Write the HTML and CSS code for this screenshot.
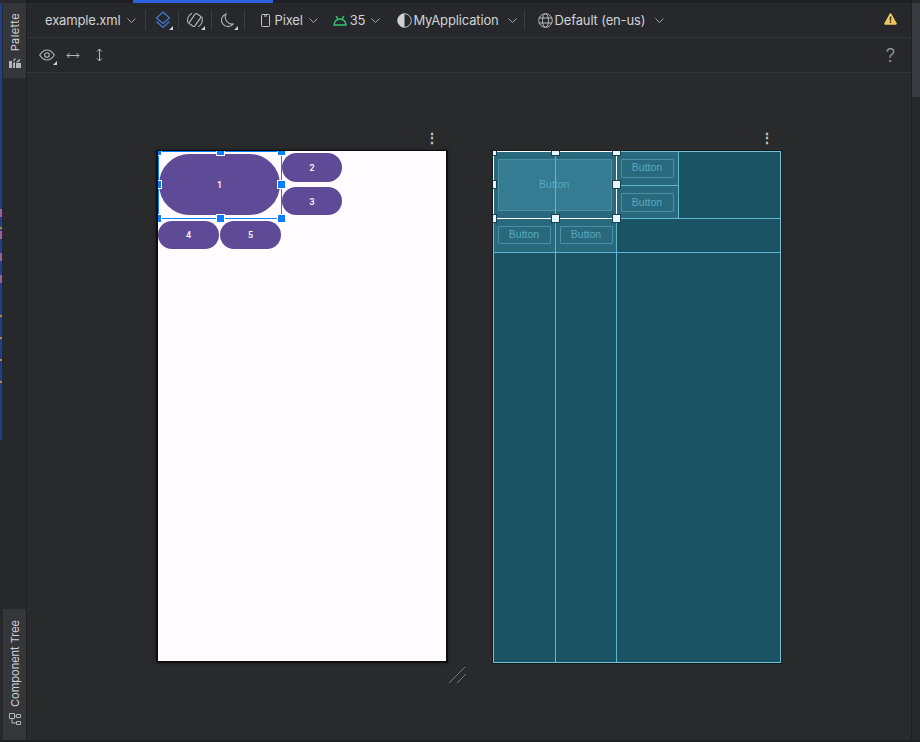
FILE: index.html
```html
<!DOCTYPE html>
<html lang="en">
<head>
  <meta charset="UTF-8" />
  <title>example.xml</title>
  <link rel="stylesheet" href="styles.css">
</head>
<body>
  <div class="ide">

    <!-- left tool strip -->
    <aside class="strip">
      <div class="gutter">
        <i class="mark pink m1"></i><i class="mark pink m2"></i><i class="mark pink m3"></i><i class="mark pink m4"></i>
        <i class="mark gold m5"></i><i class="mark gold m6"></i><i class="mark gold m7"></i><i class="mark gold m8"></i><i class="mark gold m9"></i>
      </div>
      <div class="tab tab-palette">
        <svg class="tab-icon" width="12" height="12" viewBox="0 0 12 12"><path d="M0 5h3v7H0zM4 12V7l2-1v6zM7 12V7h5v5z" fill="#b4b6bb"/><path d="M4 4.500 6 2l1 1-2.500 2.500zM7 6l3.500-3 1 1L9 6.500z" fill="#b4b6bb"/></svg>
        <span class="tab-label label-palette">Palette</span>
      </div>
      <div class="tab tab-tree">
        <svg class="tab-icon" width="12" height="13" viewBox="0 0 12 13" fill="none" stroke="#b4b6bb"><path d="M.5 1.500h5v5h-5zM7.500 2.500h4v3h-4zM7.500 9.500h4v3h-4zM5.500 4h2M3 6.500V11h4.500"/></svg>
        <span class="tab-label">Component Tree</span>
      </div>
    </aside>

    <main class="main">
      <div class="topline"><div class="progress"></div></div>

      <!-- first toolbar -->
      <div class="toolbar">
        <div class="tool tool-file">example.xml
          <svg class="chev" width="9" height="5" viewBox="0 0 9 5"><path d="M.5.500l4 4 4-4"/></svg>
        </div>
        <div class="sep sep-a"></div>
        <div class="icon corner">
          <svg width="16" height="18" viewBox="0 0 16 18" fill="none" stroke="#3d7fe0" stroke-width="1.100"><path d="M8 1l6.500 6L8 12.500 1.500 7zM1.500 10.500 8 16.500l6.500-6"/></svg>
        </div>
        <div class="sep sep-b"></div>
        <div class="icon corner">
          <svg width="18" height="18" viewBox="0 0 18 18" fill="none" stroke="#b4b6bb" stroke-width="1.100"><rect x="5.700" y="2.800" width="6.600" height="12.400" rx="1.300" transform="rotate(35 9 9)"/><path d="M2.300 12.500A7.600 7.600 0 0 1 6 2.200M15.700 5.500A7.600 7.600 0 0 1 12 15.800"/></svg>
        </div>
        <div class="sep"></div>
        <div class="icon corner">
          <svg width="13" height="15" viewBox="0 0 13 15" fill="none" stroke="#b4b6bb" stroke-width="1.100"><path d="M5 1a6.500 6.500 0 1 0 7.300 10A7 7 0 0 1 5 1z"/></svg>
        </div>
        <div class="sep sep-d"></div>
        <div class="tool tool-device">
          <svg width="9" height="13" viewBox="0 0 9 13" fill="none" stroke="#c4c6cb"><rect x=".5" y=".5" width="8" height="12" rx="1"/><path d="M3 2h3"/></svg>
          <span>Pixel</span>
          <svg class="chev" width="9" height="5" viewBox="0 0 9 5"><path d="M.5.500l4 4 4-4"/></svg>
        </div>
        <div class="tool tool-api">
          <svg width="14" height="11" viewBox="0 0 14 11" fill="none" stroke="#2fc56f" stroke-width="1.500"><path d="M1 10a6 6 0 0 1 12 0zM3.200 1l1.600 3.200M10.800 1 9.200 4.200"/></svg>
          <span>35</span>
          <svg class="chev" width="9" height="5" viewBox="0 0 9 5"><path d="M.5.500l4 4 4-4"/></svg>
        </div>
        <div class="tool tool-theme">
          <svg width="15" height="15" viewBox="0 0 15 15"><circle cx="7.500" cy="7.500" r="6.800" fill="none" stroke="#d0d2d6" stroke-width=".9"/><path d="M7.500.700a6.800 6.800 0 0 0 0 13.600z" fill="#d0d2d6"/></svg>
          <span>MyApplication</span>
          <svg class="chev chev-wide" width="9" height="5" viewBox="0 0 9 5"><path d="M.5.500l4 4 4-4"/></svg>
        </div>
        <div class="sep sep-e"></div>
        <div class="tool tool-locale">
          <svg width="15" height="15" viewBox="0 0 15 15" fill="none" stroke="#c4c6cb" stroke-width=".9"><circle cx="7.500" cy="7.500" r="6.800"/><ellipse cx="7.500" cy="7.500" rx="3" ry="6.800"/><path d="M1 5h13M1 10h13"/></svg>
          <span>Default (en-us)</span>
          <svg class="chev chev-wide" width="9" height="5" viewBox="0 0 9 5"><path d="M.5.500l4 4 4-4"/></svg>
        </div>
        <svg class="warn" width="13" height="12" viewBox="0 0 13 12"><path d="M6.500.300c.5 0 .8.300 1 .7l5.200 9.300c.4.700 0 1.400-.8 1.400H1.100c-.8 0-1.200-.7-.8-1.400L5.500 1c.2-.4.500-.7 1-.7z" fill="#f2c55c"/><path d="M5.800 3.500h1.400v4.200H5.800zM5.800 8.600h1.400V10H5.800z" fill="#27282b"/></svg>
      </div>

      <!-- second toolbar -->
      <div class="toolbar toolbar-second">
        <div class="icon corner icon-eye">
          <svg width="16" height="12" viewBox="0 0 16 12" fill="none" stroke="#b4b6bb" stroke-width="1.100"><path d="M.7 6C3 2.300 5.300 1 8 1s5 1.300 7.300 5C13 9.700 10.700 11 8 11S3 9.700.7 6z"/><circle cx="8" cy="6" r="2.300"/></svg>
        </div>
        <div class="icon icon-width">
          <svg width="14" height="7" viewBox="0 0 14 7" fill="none" stroke="#b4b6bb"><path d="M1 3.500h12M3.500 1 1 3.500 3.500 6M10.500 1 13 3.500 10.500 6"/></svg>
        </div>
        <div class="icon icon-height">
          <svg width="7" height="14" viewBox="0 0 7 14" fill="none" stroke="#b4b6bb"><path d="M3.500 1v12M1 3.500 3.500 1 6 3.500M1 10.500 3.500 13 6 10.500"/></svg>
        </div>
        <span class="help">?</span>
      </div>

      <!-- design surface -->
      <div class="canvas">
        <span class="dots dots-design">⋮</span>
        <span class="dots dots-blue">⋮</span>

        <div class="device device-design">
          <div class="cells">
            <button class="btn big">1</button>
            <button class="btn b2">2</button>
            <button class="btn b3">3</button>
            <button class="btn b4">4</button>
            <button class="btn b5">5</button>
          </div>
          <div class="selection">
            <i class="handle tl"></i><i class="handle tc"></i><i class="handle tr"></i>
            <i class="handle ml"></i><i class="handle mr"></i>
            <i class="handle bl"></i><i class="handle bc"></i><i class="handle br"></i>
          </div>
        </div>

        <div class="device device-blue">
          <div class="shade"></div>
          <div class="cells">
            <div class="ghost big">Button</div>
            <div class="ghost b2">Button</div>
            <div class="ghost b3">Button</div>
            <div class="ghost b4">Button</div>
            <div class="ghost b5">Button</div>
          </div>
          <i class="rule v1"></i><i class="rule v2"></i><i class="rule v3"></i>
          <i class="rule h1"></i><i class="rule h2"></i><i class="rule h3"></i>
          <div class="selection">
            <i class="handle tl"></i><i class="handle tc"></i><i class="handle tr"></i>
            <i class="handle ml"></i><i class="handle mr"></i>
            <i class="handle bl"></i><i class="handle bc"></i><i class="handle br"></i>
          </div>
        </div>

        <svg class="resize" width="20" height="18" viewBox="0 0 20 18" fill="none" stroke="#77797d"><path d="M1 17 17 1M9 17l9-9"/></svg>
      </div>
    </main>

    <div class="scroll"><div class="scroll-thumb"></div></div>
  </div>
</body>
</html>
```

FILE: styles.css
```css
* { margin: 0; padding: 0; box-sizing: border-box; }

html, body {
  width: 920px;
  height: 742px;
  overflow: hidden;
}

body {
  font-family: Inter, "Noto Sans", sans-serif;
  background: #1e1f22;
  color: #d0d2d6;
}

.ide {
  display: flex;
  height: 740px;
}

/* left strip */
.strip {
  position: relative;
  width: 27px;
  flex-shrink: 0;
  padding: 3px 0 0 3px;
  display: flex;
  flex-direction: column;
  justify-content: space-between;
  background: #27282b;
  border-right: 1px solid #1e1f22;
}

.gutter {
  position: absolute;
  left: 0;
  top: 3px;
  width: 2px;
  height: 437px;
  background: #1d3f8c;
}

.mark { position: absolute; left: 0; width: 2px; }
.pink { height: 8px; background: #a0609f; }
.gold { height: 2px; background: #b08c3c; }
.m1 { top: 206px; }
.m2 { top: 228px; }
.m3 { top: 250px; }
.m4 { top: 272px; }
.m5 { top: 224px; }
.m6 { top: 312px; }
.m7 { top: 334px; }
.m8 { top: 356px; }
.m9 { top: 378px; }

.tab {
  width: 23px;
  background: #35363a;
  display: flex;
  flex-direction: column-reverse;
  align-items: center;
  justify-content: flex-start;
  gap: 5px;
}

.tab-palette { height: 75px; padding-bottom: 10px; }
.tab-tree { height: 131px; padding-bottom: 15px; }

.tab-label {
  writing-mode: vertical-rl;
  transform: rotate(180deg);
  font-size: 11px;
  color: #d0d2d6;
  white-space: nowrap;
}

.label-palette { letter-spacing: 0.4px; }

.tab-icon { flex-shrink: 0; }

/* main column */
.main {
  width: 885px;
  flex-shrink: 0;
  display: flex;
  flex-direction: column;
  border-right: 1px solid #1e1f22;
}

.topline {
  height: 3px;
  background: #1e1f22;
  padding-left: 106px;
}

.progress {
  width: 140px;
  height: 3px;
  background: #2c62e0;
}

.toolbar {
  height: 35px;
  display: flex;
  align-items: center;
  padding-left: 18px;
  background: #27282b;
  border-bottom: 1px solid #353639;
  font-size: 13px;
  letter-spacing: -0.15px;
  flex-shrink: 0;
}

.toolbar-second {
  padding-left: 11px;
}

.tool {
  display: flex;
  align-items: center;
  color: #d0d2d6;
  white-space: nowrap;
}

.chev {
  margin-left: 6px;
  fill: none;
  stroke: #a4a6ab;
}

.chev-wide { margin-left: 9px; }

.tool-device { margin-left: 16px; }
.tool-device span { margin-left: 5px; }
.tool-api { margin-left: 15px; }
.tool-api span { margin-left: 3px; }
.tool-theme { margin-left: 17px; }
.tool-theme span { margin-left: 1px; }
.tool-locale { margin-left: 13px; }
.tool-locale span { margin-left: 2px; }
.tool-locale .chev { margin-left: 10px; }

.sep {
  width: 1px;
  height: 20px;
  flex-shrink: 0;
  background: #3c3d41;
  margin: 0 7px;
}

.sep-a { margin: 0 8px 0 9px; }
.sep-b { margin: 0 7px 0 6px; }
.sep-d { margin: 0 0 0 7px; }
.sep-e { margin: 0 0 0 7px; }

.icon {
  position: relative;
  display: flex;
  align-items: center;
  justify-content: center;
}

.corner { width: 18px; height: 20px; }

.corner::after {
  content: "";
  position: absolute;
  right: -1px;
  bottom: 0;
  border-left: 4px solid transparent;
  border-bottom: 4px solid #d0d2d6;
}

.icon-width { margin-left: 10px; }
.icon-height { margin-left: 16px; }

.warn {
  margin-left: auto;
  margin-right: 14px;
  margin-top: -2px;
}

.help {
  margin-left: auto;
  margin-right: 16px;
  font-size: 19px;
  color: #9a9ca0;
  font-weight: 300;
}

/* design surface, devices sit on a free canvas */
.canvas {
  position: relative;
  flex: 1;
  background: #292a2c;
}

.dots {
  position: absolute;
  top: 56px;
  font-size: 14px;
  line-height: 18px;
  font-weight: 700;
  color: #c4c6cb;
}

.dots-design { left: 398px; }
.dots-blue { left: 733px; }

.device {
  position: absolute;
}

.device-design {
  left: 129px;
  top: 77px;
  width: 292px;
  height: 513px;
  background: #fffbfe;
  border: 2px solid #0d0d0e;
  border-top-width: 1px;
  box-shadow: 0 0 4px rgba(0, 0, 0, 0.4);
}

.device-blue {
  left: 466px;
  top: 78px;
  width: 288px;
  height: 512px;
  background: #1a5364;
  border: 1px solid #6fc4d8;
  outline: 1px solid #17181a;
}

.cells {
  display: grid;
  grid-template-columns: 61.500px 61.500px 62px;
  grid-template-rows: 33.500px 33.500px 34px;
  width: 185px;
}

.device-blue .cells { margin: -1px 0 0 -1px; }

.btn {
  border: none;
  border-radius: 14.500px;
  background: #5f4a97;
  color: #fff;
  font-family: Roboto, sans-serif;
  font-size: 9px;
  font-weight: 500;
}

.big {
  grid-column: span 2;
  grid-row: span 2;
}

.btn.big { margin: 3px 1px; border-radius: 31px; }
.btn.b2 { margin: 2px 1px 2.500px; padding-top: 1px; }
.btn.b3 { margin: 2.500px 1px 3px; padding-top: 1px; }
.btn.b4 { margin: 3px 0.500px 3px 0; }
.btn.b5 { margin: 3px 0 3px 0.500px; }

.shade {
  position: absolute;
  left: -1px;
  top: -1px;
  width: 186px;
  height: 67px;
  background: rgba(105, 195, 225, 0.2);
}

.shade::after {
  content: "";
  position: absolute;
  left: 0;
  top: 67px;
  width: 124px;
  height: 34px;
  background: rgba(105, 195, 225, 0.2);
}

.ghost {
  position: relative;
  border: 1px solid #4a8fa3;
  border-radius: 1px;
  color: #57a9c0;
  font-family: "Liberation Sans", sans-serif;
  font-size: 10.500px;
  display: flex;
  align-items: center;
  justify-content: center;
  padding: 0 1px 2px 0;
}

.ghost.big {
  margin: 8px 4.500px 7px 5px;
  background: rgba(105, 195, 225, 0.2);
}

.ghost.b2 { margin: 8px 4px 7px 5px; }
.ghost.b3 { margin: 8.500px 4px 6px 5px; }
.ghost.b4 { margin: 8px 3.500px 8px 5px; }
.ghost.b5 { margin: 8px 3px 8px 5.500px; }

.rule {
  position: absolute;
  background: #5eb8cf;
}

.v1 { left: 61px; top: 0; bottom: 0; width: 1px; }
.v2 { left: 122px; top: 0; bottom: 0; width: 1px; }
.v3 { left: 184px; top: 0; height: 67px; width: 1px; }
.h1 { left: 0; right: 0; top: 66px; height: 1px; }
.h2 { left: 0; right: 0; top: 100px; height: 1px; }
.h3 { left: 123px; width: 61px; top: 33px; height: 1px; }

/* selection box with handles */
.selection {
  position: absolute;
  left: 0;
  top: 0;
  width: 124px;
  height: 68px;
  border: 1px solid #0a7cff;
}

.device-blue .selection {
  left: -1px;
  top: -1px;
  border-color: #fff;
}

.handle {
  position: absolute;
  width: 9px;
  height: 9px;
  background: #0a7cff;
  border: 1px solid #fff;
}

.device-blue .handle {
  background: #e6f6fb;
  border: 1px solid #17414e;
}

.tl { left: -6px; top: -5px; }
.tc { left: 57px; top: -5px; }
.tr { right: -5px; top: -5px; }
.ml { left: -6px; top: 28px; }
.mr { right: -5px; top: 28px; }
.bl { left: -6px; bottom: -5px; }
.bc { left: 57px; bottom: -5px; }
.br { right: -5px; bottom: -5px; }

.tc, .tr { clip-path: inset(4px 0 0 0); }
.ml, .bl { clip-path: inset(0 0 0 5px); }
.tl { clip-path: inset(4px 0 0 5px); }

.resize {
  position: absolute;
  left: 421px;
  top: 593px;
}

/* right edge */
.scroll {
  flex: 1;
  padding-top: 3px;
  background: #27282b;
}

.scroll-thumb {
  height: 94px;
  background: #3a3b40;
}
```
